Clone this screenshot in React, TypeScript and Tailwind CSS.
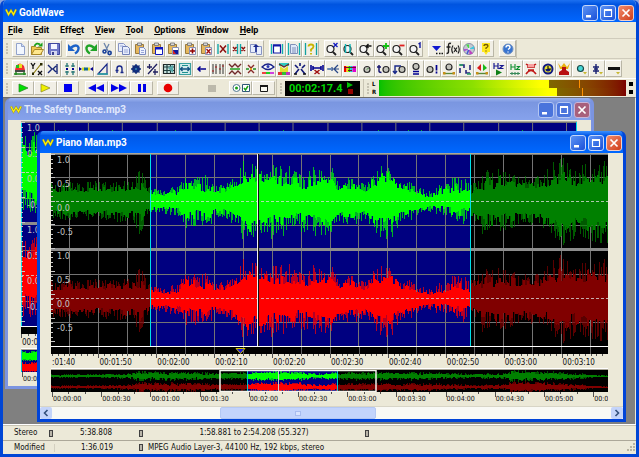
import React from "react";

/* ---------- toolbar icons: each is a list of [path, fill, stroke, strokeWidth] ---------- */
type Stroke = [string, string, string?, number?];
type IconDef = { name: string; art: Stroke[] };

const N = "none";
const NAVY = "#000090";
const PAGE: Stroke = ["M3.5 1.5h5l3 3v8h-8z", "#f2f7ff", "#92a3cc"];
const BOARD: Stroke[] = [
  ["M2.5 2.5h8v9h-8z", "#e5b75c", "#9a7a3c"],
  ["M4.5 1h4v2.500h-4z", "#d8d8d8", "#707070", 0.8],
];
const LENS: Stroke[] = [
  ["M2 7a3.500 3.500 0 1 0 7 0a3.500 3.500 0 1 0-7 0", "#f4f4f4", "#202020", 1.2],
  ["M8 10l3 3", N, "#202020", 1.8],
];
const KNOB: Stroke[] = [
  ["M5 7.500a3 3 0 1 0 6 0a3 3 0 1 0-6 0", "#c4c4bc", "#282828", 1.2],
  ["M8 7.500l1.500-1.500", N, "#208020", 1],
];
const SPECTRUM: Stroke[] = [
  ["M1 4h2.500v6H1z", "#f00000"],
  ["M3.500 4h2v6h-2z", "#f0e000"],
  ["M5.500 4h2v6h-2z", "#00e000"],
  ["M7.500 4h2v6h-2z", "#00d0e0"],
  ["M9.500 4h3.500v6H9.500z", "#e000d0"],
];

const fileIcons: IconDef[] = [
  { name: "New", art: [PAGE, ["M8.500 1.500v3h3", "#cddcf5", "#92a3cc"]] },
  {
    name: "Open",
    art: [
      ["M1.500 12.500v-8h4l1 1h5v7z", "#f0c850", "#a88828"],
      ["M1.500 12.500l3-5h9l-3 5z", "#ffe88c", "#a88828"],
      ["M4.500 4q2-4 5.500-1.500", N, "#18a018", 1.8],
      ["M8 4.500h4.500v-4z", "#18a018"],
    ],
  },
  {
    name: "Save",
    art: [
      ["M1.500 1.500h11v11h-10l-1-1z", "#7078c8", "#4048a0"],
      ["M4 2h6v5H4z", "#f4f6ff"],
      ["M4 9h6v4H4z", "#d4d8f0"],
      ["M5 10h2v3H5z", "#3a4090"],
    ],
  },
];

const editIcons: IconDef[] = [
  { name: "Undo", art: [["M4 5.500q6-4 7.500 0q.5 3.500-3.500 6", N, "#1c62c8", 2.4], ["M1 2v7h7z", "#1c62c8"]] },
  { name: "Redo", art: [["M10 5.500q-6-4-7.500 0q-.5 3.500 3.500 6", N, "#20a428", 2.4], ["M13 2v7H6z", "#20a428"]] },
  {
    name: "Cut",
    art: [
      ["M4 1l4 8M9 2L6 8", N, "#6d85aa", 1.3],
      ["M3 9.500a1.500 1.500 0 1 0 3 0a1.500 1.500 0 1 0-3 0M8 11a1.600 1.600 0 1 0 3.200 0a1.600 1.600 0 1 0-3.200 0", N, "#163f98", 1.6],
    ],
  },
  {
    name: "Copy",
    art: [
      ["M1.500 1.500h5l2 2v6h-7z", "#e8eefc", "#8794c4"],
      ["M5.500 4.500h5l2 2v6h-7z", "#e8eefc", "#7080b8"],
      ["M7 8h4M7 10h4M3 4h3", N, "#9aa8d8"],
    ],
  },
  { name: "Paste", art: [...BOARD, ["M6.500 5.500h4l2 2v5h-6z", "#eef3ff", "#7c8cc0"], ["M8 8.500h3M8 10.500h3", N, "#9aa8d8"]] },
  { name: "Paste new", art: [...BOARD, ["M5.500 5.500h7v7h-7z", "#ffffff", "#1018c0"], ["M5 5h8v2.500H5z", "#1018c0"]] },
  { name: "Paste at", art: [...BOARD, ["M6.500 5.500h6v7h-6z", "#ffffff", "#8890b8"], ["M7 8h5v4H7z", "#1018a0"], ["M7 8l3 4h-3z", "#e02020"]] },
  { name: "Mix", art: [...BOARD, ["M6.500 5.500h6v7h-6z", "#ffffff", "#8890b8"], ["M9.500 6.500v5M7 9h5", N, "#900000", 1.6]] },
  { name: "Replace", art: [...BOARD, ["M6.500 5.500h6v7h-6z", "#ffffff", "#8890b8"], ["M7.500 7l4 4.500M11.500 7l-4 4.500", N, "#a01010", 1.3]] },
  { name: "Delete", art: [["M2 2v10M12 2v10", N, "#10a8a8", 1.4], ["M4 3.500l6 7M10 3.500l-6 7", N, "#8c1010", 1.5]] },
  { name: "Trim", art: [["M5.500 2v10M8.500 2v10", N, "#10a8a8", 1.4], ["M1 5l3.500 4M4.500 5L1 9M9.500 5l3.500 4M13 5L9.500 9", N, "#8c1010", 1.4]] },
  {
    name: "Duplicate",
    art: [
      ["M1.500 2.500h5v8h-5z", "#e8eefc", "#8794c4"],
      ["M7.500 4.500h5v8h-5z", "#e8eefc", "#8794c4"],
      ["M7 10V4", N, "#182890", 1.5],
      ["M4 5L7 2l3 3z", "#182890"],
    ],
  },
];

const selectIcons: IconDef[] = [
  { name: "Select view", art: [["M1.500 2v10M12.500 2v10", N, "#10b0b0", 1.3], ["M3.500 3h7v8h-7z", "#ffffff", "#1018a8", 1.2], ["M3 2.500h8v2H3z", "#1018a8"]] },
  { name: "Select all", art: [["M1.500 1v12M12.500 1v12", N, "#10b0b0", 1.3], ["M3.500 2.500h5l2 2v7h-7z", "#dfe8fa", "#8090b8"], ["M5 6h4M5 8h4M5 10h4", N, "#8090b8"]] },
  { name: "Set selection", art: [["M1.500 1v12M12.500 1v12", N, "#10a0a0", 1.3], ["M4.500 4.500q0-2 2.500-2t2.500 2q0 1.500-2.500 3v2M7 11v1.500", N, "#c8b400", 1.8]] },
];

const zoomIcons: IconDef[] = [
  { name: "Zoom 10%", art: [...LENS, ["M8.500 1l4 4M12.500 1l-4 4", N, "#1018c0", 1.3]] },
  { name: "Zoom selection", art: [...LENS, ["M3.500 2v9M8 2v9", N, "#10b8b8", 1.4]] },
  { name: "Zoom previous", art: [...LENS, ["M8.500 4h5M10.500 2l-2 2l2 2", N, "#101010", 1.3]] },
  { name: "Zoom in", art: [...LENS, ["M11 1v6M8 4h6", N, "#10c010", 1.8]] },
  { name: "Zoom out", art: [...LENS, ["M8.500 3.500h5", N, "#e02020", 1.8]] },
  { name: "Zoom 1:1", art: [...LENS, ["M10.500 2l1.500-1v5", N, "#1018a0", 1.4]] },
];

const toolIcons: IconDef[] = [
  { name: "Drop cue", art: [["M3 4h9L7.500 9z", "#1018d0"], ["M7 11.500h1.500M10 11.500h1.500M12.500 11.500h1.500", N, "#101010", 1.5]] },
  {
    name: "Expression evaluator",
    art: [
      ["M5 1.500q-2.500-1-2.500 2v6q0 2-2 2M.500 5h4", N, "#202020", 1.4],
      ["M7 3.500q-2.500 4 0 8M12 3.500q2.500 4 0 8M8 5.500l3 4.500M11 5.500l-3 4.500", N, "#202020", 1.2],
    ],
  },
  {
    name: "CD reader",
    art: [
      ["M1.500 7a5.500 5.500 0 1 0 11 0a5.500 5.500 0 1 0-11 0", "#c4c8d0", "#8890a8"],
      ["M7 7l-3-4.500h3z", "#48d848"],
      ["M7 7l5-3v3z", "#40c8e0"],
      ["M7 7l4 4.500l-3.500 1z", "#c040c0"],
      ["M7 7L2 9.500V7z", "#b050d0"],
      ["M7 7l-2 5", N, "#4858d0", 1.5],
      ["M6 7a1 1 0 1 0 2 0a1 1 0 1 0-2 0", "#ffffff"],
    ],
  },
  { name: "Context help", art: [["M3 1h8v9H9l-2 3l-2-3H3z", "#ffe820"], ["M5 4q0-1.500 2-1.500t2 1.500q0 1-2 2v1M7 8.500v1", N, "#705800", 1.3]] },
];

const helpIcons: IconDef[] = [
  {
    name: "Help",
    art: [
      ["M2 7a5 5 0 1 0 10 0a5 5 0 1 0-10 0", "#3874d0", "#7090c0"],
      ["M5 5.500q0-2 2-2t2 1.800q0 1-2 2.200M7 9.500v1", N, "#ffffff", 1.4],
    ],
  },
];

const effectIcons: IconDef[] = [
  {
    name: "Censor",
    art: [
      ["M3 4q4-5 8 0l1 4H2z", "#f03030"],
      ["M3 3h3v3H3z", "#20c020"],
      ["M6 2h3v4H6z", "#e8e020"],
      ["M2 9h10", N, "#101010", 1.4],
      ["M1 12h12M3 10v3M11 10v3", N, "#208820", 1.5],
    ],
  },
  { name: "Channel mixer", art: [["M1 1l2 3l2-3M3 4v3M8 9l4 4M12 9l-4 4", N, "#101010", 1.3], ["M11 2L3 12", N, "#887800", 1.1], ["M10 1h2.500v2.500H10zM2 10.500h2V13H2z", "#282800"]] },
  { name: "Compressor", art: [["M2 3l4 4l-4 4M11 2v10M10 4L7 7l3 3", N, "#182878", 1.4]] },
  { name: "Doppler", art: [["M4 1v4M4 9v4M10 1v4M10 9v4M2 4h4M2 10h4M8 4h4M8 10h4", N, "#106868", 1.2], ["M3 6h2v2H3zM9 6h2v2H9z", NAVY]] },
  { name: "Dynamics", art: [["M0 5l3 2l-3 2zM14 5l-3 2l3 2z", NAVY], ["M3 5.500h3v3H3z", "#d8e020"], ["M5 5.500h4v3H5z", "#106890"], ["M9 5.500h2v3H9z", "#e8e020"]] },
  { name: "Echo", art: [["M2 12L11 2v10z", N, "#182888", 1.2], ["M2 12h10", N, "#20a0a0", 1.3]] },
  { name: "Filter", art: [["M5 11V6.500q0-2.500 2.500-2.500t2.500 2.500V10M3.500 8.500h3M8.500 10.500h3", N, "#182888", 1.4]] },
  {
    name: "Flanger",
    art: [
      ["M3.500 7a3.500 3.500 0 1 0 7 0a3.500 3.500 0 1 0-7 0", "#183888", "#081858", 1],
      ["M7 2v10M2 7h10M3.500 3.500l7 7M10.500 3.500l-7 7", N, "#103080", 1.3],
      ["M6 7a1 1 0 1 0 2 0a1 1 0 1 0-2 0", "#3888b0"],
    ],
  },
  { name: "Interpolate", art: [["M2 5h5M4.500 2v5M8 10h5M10 7v6M12 2L3 12", N, "#202060", 1.3]] },
  {
    name: "Invert",
    art: [
      ["M1.500 2.500h11v9h-11z", "#c8e4e0", "#202828", 1.2],
      ["M2 5h10M2 8.500h10M5 2v9M8.500 2v9", N, "#204040", 1.2],
      ["M6 6l5-3v8z", "#58a8a8"],
    ],
  },
  { name: "Maximize", art: [["M1.500 1.500h11v11h-11z", "#d4ecec", "#38a0a0", 1.2], ["M2 7h10M4.500 5L2.500 7l2 2M9.500 5l2 2l-2 2", N, "#105080", 1.3], ["M4 3.500h6M4 10.500h6", N, "#209090"]] },
  { name: "Offset", art: [["M3 7h8M5.500 4.500L3 7l2.500 2.500", N, NAVY, 1.5]] },
  { name: "Match volume", art: [["M2 2v10M5 2v10M9 2v10M12 2v10", N, "#303030", 1], ["M1 9h2M4 5h2M8 7h2M11 4h2", N, "#a04040", 1.5]] },
  { name: "Pan", art: [["M1 2l3 3l3-3l3 3l3-3M1 12l3-3l3 3l3-3l3 3", N, "#702828", 1.4], ["M2 7h10", N, "#20a020", 1.5]] },
  { name: "Pitch", art: [["M4 3l3 3l3-3M4 11l3-3l3 3", N, "#882828", 1.4], ["M2 7h3M9 7h3", N, "#209020", 1.6], ["M6 6h2v2H6z", "#e0a020"]] },
  {
    name: "Noise reduction",
    art: [
      ["M1 5q6-6 12 0q-6 5-12 0z", "#ffffff", "#182088", 1.3],
      ["M5.500 4.500a1.500 1.500 0 1 0 3 0a1.500 1.500 0 1 0-3 0", "#2838b0"],
      ["M1 10h4v2H1z", "#f04040"],
      ["M5 10h4v2H5z", "#20d020"],
      ["M9 10h4v2H9z", "#d040e0"],
    ],
  },
  {
    name: "Parametric EQ",
    art: [
      ["M2 1h10v3H2z", "#30c8c0"],
      ["M3 4l4 3l4-3v6H3z", "#e0e030"],
      ["M1 10h4v3H1z", "#e03030"],
      ["M5 10h4v3H5z", "#30c030"],
      ["M9 10h4v3H9z", "#c030c0"],
      ["M2 2l5 3l5-3", N, "#702020", 1.2],
    ],
  },
  { name: "Pop and click", art: [["M2 12l4-5M12 12L8 7M7 1v3M2 3l3 3M12 3L9 6", N, "#101878", 1.6], ["M1 12h3M10 12h3", N, "#101010", 1.4]] },
  { name: "Silence reduction", art: [["M1 3v6M3 4v4M13 3v6M11 4v4M3 6h8", N, NAVY, 1.6], ["M4.500 8l5 4M9.500 8l-5 4", N, "#a01010", 1.5]] },
  { name: "Smoother", art: [["M1 7h12M8 7l4-4M8 7l4 4M6 5v4", N, "#284888", 1.2], ["M2 6h4v2H2z", "#6888b8"]] },
  { name: "Spectrum filter", art: [...SPECTRUM, ["M1 5.500h12M5 8.500h4", N, "#701030", 1]] },
  { name: "Resample", art: [...KNOB] },
  { name: "Reverb", art: [["M7 7.500a3 3 0 1 0 6 0a3 3 0 1 0-6 0", "#c4c4bc", "#282828", 1.2], ["M3 3v6q0 1.500 2.500 1.500M1 5h4", N, "#181870", 1.5]] },
  { name: "Reverse", art: [["M7 7.500a3 3 0 1 0 6 0a3 3 0 1 0-6 0", "#c4c4bc", "#282828", 1.2], ["M3 11V4h6M1 9l2 2.500l2-2.500", N, "#182888", 1.4]] },
  { name: "Time warp", art: [["M4 4.500a3 3 0 1 0 6 0a3 3 0 1 0-6 0", "#c4c4bc", "#282828", 1.2], ["M4 9.500h6M4 12h6", N, NAVY, 1.3]] },
  { name: "Change volume", art: [["M2 7.500a3 3 0 1 0 6 0a3 3 0 1 0-6 0", "#c4c4bc", "#282828", 1.2], ["M11.500 3v5.500M11.500 9.500v2", N, NAVY, 1.7]] },
  { name: "Fade in", art: [["M4 5a3 3 0 1 0 6 0a3 3 0 1 0-6 0", "#c4c4bc", "#282828", 1.2], ["M2 11.500h10", N, "#588838", 1.3], ["M1 10h2.500v2.500H1zM10.500 10H13v2.500h-2.500z", "#c89018"]] },
  { name: "Fade out", art: [["M2 3h4v3M12 11H8V8M12 3v5M2 6v5", N, "#282880", 1.6], ["M1 3h4M9 12h4", N, "#20a060", 1.3]] },
  { name: "Shape volume", art: [["M6 2L2 6l4 3z", "#d81818"], ["M8 2l4 4l-4 3z", "#18b818"], ["M2 11.500h10", N, "#588838", 1.4], ["M1 10h2.500v2.500H1zM10.500 10H13v2.500h-2.500z", "#c89018"]] },
  { name: "Playback rate", art: [["M3 1v6M7 1v6M3 4h4M8.500 3.500h3.500l-3.500 3h4", N, "#181890", 1.2], ["M5 7.500l6 3l-6 3z", "#108018"]] },
  { name: "Sample rate", art: [["M3 2v6M7 2v6M3 5h4M8.500 4.500h3l-3 3h3.500", N, "#109030", 1.1], ["M2 11.500h10M4 10v3M7 10v3M10 10v3", N, "#388858", 1.1]] },
  { name: "Mechanize", art: [["M2 2q5 4 10 0M2 12q5-7 10 0M3 5h8M4 8h6", N, "#c01818", 1.6], ["M4 2h6v3H4z", "#f8a0a0"]] },
  { name: "Timer", art: [["M2.500 7a4.500 4.500 0 1 0 9 0a4.500 4.500 0 1 0-9 0", "#e8e030", "#101880", 2], ["M7 7m-2.500 0a2.500 2.500 0 1 0 5 0z", "#101880"], ["M7 4v3h3", N, "#101010", 1.2]] },
  { name: "Voice over", art: [["M1 1l3 4l3-4l3 4l3-4l-2 6H3z", "#e8b010"], ["M5 5h4v3l3 2v3H2v-3l3-2z", "#b81010"]] },
  { name: "Plug-in", art: [["M3.500 6.500a3 3 0 1 0 6 0a3 3 0 1 0-6 0", "#48d8d8", "#184848", 1.2], ["M9 10h4l-2 2.500z", "#c8b830"]] },
  { name: "Automate", art: [["M6 2v10M3 5h6M3 9h6M4 7h4", N, "#182070", 1.4], ["M9 10h4l-2 2.500z", "#c8b830"]] },
  { name: "Presets", art: [["M1 5h12v3H1z", "#101010"], ["M9 10h4l-2 2.500z", "#c8b830"]] },
];

function Glyph({ art }: { art: Stroke[] }) {
  return (
    <svg viewBox="0 0 14 14" className="h-[14px] w-[14px] shrink-0" aria-hidden="true">
      {art.map(([d, fill, stroke, width], i) => (
        <path key={i} d={d} fill={fill} stroke={stroke ?? "none"} strokeWidth={width ?? 1} />
      ))}
    </svg>
  );
}

const raised =
  "border border-t-white border-l-white border-r-[#b9b6a6] border-b-[#b9b6a6] bg-[#f1efe6]";

function IconGroup({ icons, width }: { icons: IconDef[]; width: string }) {
  return (
    <div className={`flex h-[17px] shrink-0 ${width}`}>
      {icons.map((icon) => (
        <button
          key={icon.name}
          type="button"
          aria-label={icon.name}
          className={`flex min-w-0 flex-1 items-center justify-center ${raised}`}
        >
          <Glyph art={icon.art} />
        </button>
      ))}
    </div>
  );
}

function Grip() {
  return (
    <div className="flex shrink-0 flex-col gap-px px-[3px]">
      {[0, 1, 2, 3].map((i) => (
        <span key={i} className="h-[2px] w-[2px] bg-[#c6c2b2]" />
      ))}
    </div>
  );
}

/* ---------- transport ---------- */
function TransportButton({ label, children }: { label: string; children: React.ReactNode }) {
  return (
    <button type="button" aria-label={label} className={`flex flex-1 items-center justify-center ${raised}`}>
      <svg viewBox="0 0 18 10" className="h-[10px] w-[18px]" aria-hidden="true">
        {children}
      </svg>
    </button>
  );
}

function TransportBar() {
  return (
    <div className="flex h-[19px] shrink-0 items-center border-t border-white">
      <div className="w-[9px] shrink-0">
        <Grip />
      </div>
      <div className="flex h-[14px] w-[67px] shrink-0">
        <TransportButton label="Play"><path d="M5 1l9 4l-9 4z" fill="#00e000" stroke="#208020" strokeWidth=".7" /></TransportButton>
        <TransportButton label="Play selection"><path d="M5 1l9 4l-9 4z" fill="#f0f000" stroke="#888820" strokeWidth=".7" /></TransportButton>
        <TransportButton label="Stop"><path d="M5 1h8v8H5z" fill="#0000f0" /></TransportButton>
      </div>
      <div className="ml-[6px] flex h-[14px] w-[68px] shrink-0">
        <TransportButton label="Rewind"><path d="M9 1v8L1 5zM17 1v8L9 5z" fill="#0000e8" /></TransportButton>
        <TransportButton label="Fast forward"><path d="M1 1v8l8-4zM9 1v8l8-4z" fill="#0000e8" /></TransportButton>
        <TransportButton label="Pause"><path d="M5 1h3v8H5zM10 1h3v8h-3z" fill="#0000e8" /></TransportButton>
      </div>
      <div className="ml-[4px] flex h-[14px] w-[22px] shrink-0">
        <TransportButton label="Record"><circle cx="9" cy="5" r="4.300" fill="#e80000" /></TransportButton>
      </div>
      <div className="ml-[29px] h-[7px] w-[8px] shrink-0 bg-[#bcb9ab]" />
      <div className="ml-[13px] flex h-[14px] w-[46px] shrink-0">
        <TransportButton label="Options">
          <circle cx="4.500" cy="5" r="3.500" fill="#fff" stroke="#507890" />
          <circle cx="4.500" cy="5" r="1.500" fill="#18a018" />
          <path d="M10.500 1.500h7v7h-7z" fill="#fff" stroke="#305878" />
          <path d="M12 5l1.500 2L16 3" fill="none" stroke="#18a018" strokeWidth="1.500" />
        </TransportButton>
        <TransportButton label="Control window">
          <path d="M5.500 2.500h7v6h-7z" fill="#f8f8f0" stroke="#181818" />
          <path d="M5 2h8v2H5z" fill="#181818" />
        </TransportButton>
      </div>
      <div className="ml-px flex h-[18px] items-center border-l border-[#c9c5b4]">
        <Grip />
      </div>
      <div className="flex h-[15px] w-[75px] shrink-0 items-center justify-between bg-black pl-[4px] pr-[6px] font-['Roboto',sans-serif] text-[11px] font-bold leading-none text-[#00d800]">
        <output>00:02:17.4</output>
        <svg viewBox="0 0 7 12" className="h-[12px] w-[7px]" aria-hidden="true">
          <path d="M0 0l6 3l-6 3z" fill="#00c000" />
          <path d="M1 7h5v5H1z" fill="#900000" />
        </svg>
      </div>
      <div className="ml-[3px] flex h-[18px] items-center border-l border-[#c9c5b4]">
        <Grip />
      </div>
      <div className="flex h-[16px] w-[7px] shrink-0 flex-col text-[6px] font-bold leading-[8px] text-black">
        <span>L</span>
        <span>R</span>
      </div>
      <LevelMeter />
      <div className="flex h-[15px] w-[10px] shrink-0 flex-col items-center justify-around">
        <span className="h-[4px] w-[4px] bg-black" />
        <span className="h-[4px] w-[4px] bg-black" />
      </div>
    </div>
  );
}

function LevelMeter() {
  const channels = [
    { level: 69, peak: 81 },
    { level: 72, peak: 82 },
  ];
  return (
    <div className="flex h-[16px] min-w-0 flex-1 flex-col" role="img" aria-label="Level meter">
      {channels.map((c, i) => (
        <div key={i} className="relative flex flex-1">
          <span
            className="bg-linear-to-r from-[#00c000] via-[#8ce000] via-55% to-[#ffff00] to-95%"
            style={{ width: `${c.level}%` }}
          />
          <span className="flex-1 bg-linear-to-r from-[#7e6600] via-[#864400] to-[#7c0000]" />
          <span className="absolute inset-y-0 w-px bg-[#ff9000]" style={{ left: `${c.peak}%` }} />
        </div>
      ))}
    </div>
  );
}

/* ---------- window chrome ---------- */
function Logo() {
  return (
    <svg viewBox="0 0 12 9" className="h-[9px] w-[12px] shrink-0" aria-hidden="true">
      <path d="M1 1.500l2.500 5L6 2.500l2.500 4L11 1.500" fill="none" stroke="#8c8a20" strokeWidth="2.200" />
      <path d="M1 1.500l2.500 5L6 2.500l2.500 4L11 1.500" fill="none" stroke="#f8ec10" strokeWidth="1.400" />
    </svg>
  );
}

function CaptionButtons({ faded = false }: { faded?: boolean }) {
  const base = "flex h-[16px] w-[16px] items-center justify-center rounded-[3px] border";
  const blue = faded ? "border-[#b4c6f2] bg-[#4a74dc]" : "border-[#c5d7fa] bg-linear-to-br from-[#5c92f4] to-[#1c4fd8]";
  const red = faded ? "border-[#c8b4d8] bg-[#a8607c]" : "border-[#f4d0c8] bg-linear-to-br from-[#f08868] to-[#d03c14]";
  return (
    <div className="flex gap-[2px]">
      <button type="button" aria-label="Minimize" className={`${base} ${blue}`}>
        <svg viewBox="0 0 12 12" className="h-[12px] w-[12px]"><path d="M2 8h5v2.500H2z" fill="#fff" /></svg>
      </button>
      <button type="button" aria-label="Maximize" className={`${base} ${blue}`}>
        <svg viewBox="0 0 12 12" className="h-[12px] w-[12px]"><path d="M2 2.500h8M2.500 3v6.500h7V3M2 3.500h8" fill="none" stroke="#fff" strokeWidth="1.200" /></svg>
      </button>
      <button type="button" aria-label="Close" className={`${base} ${red}`}>
        <svg viewBox="0 0 12 12" className="h-[12px] w-[12px]"><path d="M2.500 2.500l7 7M9.500 2.500l-7 7" stroke="#fff" strokeWidth="1.700" /></svg>
      </button>
    </div>
  );
}

/* ---------- waveform data ---------- */
type Env = [number, number, number][]; // x, body height, spike height

const pianoEnv: Env = [
  [0, 9, 17], [49, 10, 18], [80, 10, 20], [88, 12, 30], [99, 7, 13], [112, 5, 11], [125, 7, 15],
  [134, 9, 24], [150, 10, 26], [164, 9, 18], [174, 8, 16], [184, 14, 25], [194, 20, 40],
  [207, 18, 36], [229, 14, 34], [249, 12, 28], [269, 15, 32], [281, 17, 35], [286, 11, 20],
  [299, 11, 22], [314, 10, 18], [324, 14, 29], [338, 16, 38], [349, 11, 22], [364, 7, 15],
  [377, 4, 9], [389, 5, 15], [404, 7, 22], [419, 7, 20], [424, 10, 24], [430, 12, 30],
  [449, 13, 32], [469, 12, 23], [489, 12, 26], [504, 17, 36], [511, 19, 46], [524, 15, 32],
  [539, 17, 38], [557, 18, 38],
];
const danceEnv: Env = [[0, 18, 38], [557, 18, 38]];
const overviewEnv: Env = [
  [0, 0.5, 1.5], [75, 0.7, 2.5], [84, 1.5, 4.5], [140, 1.6, 4.5], [176, 1.2, 3.5], [214, 2.5, 5],
  [250, 2, 4.5], [264, 0.8, 2.5], [280, 1.5, 4], [371, 1.5, 4], [418, 0.8, 2.5], [455, 1, 3],
  [460, 2.5, 6], [500, 1.6, 4.5], [530, 1, 3], [545, 0.5, 1], [557, 0.5, 0.5],
];
const danceOverviewEnv: Env = [[0, 3.5, 5], [557, 3.5, 5]];

function noise(i: number, seed: number) {
  const v = Math.sin(i * 12.9898 + seed * 78.233) * 43758.5453;
  return v - Math.floor(v);
}

function sample(env: Env, x: number): [number, number] {
  for (let i = 1; i < env.length; i++) {
    if (x <= env[i][0]) {
      const [x0, a0, b0] = env[i - 1];
      const [x1, a1, b1] = env[i];
      const t = (x - x0) / (x1 - x0);
      return [a0 + (a1 - a0) * t, b0 + (b1 - b0) * t];
    }
  }
  const last = env[env.length - 1];
  return [last[1], last[2]];
}

function wavePaths(env: Env, mid: number, from: number, to: number, seed: number) {
  let body = "";
  let spikes = "";
  for (let x = from; x < to; x++) {
    const [a, b] = sample(env, x);
    const edge = (salt: number) => {
      const slow = noise(Math.floor(x / 5), salt + 11);
      const quick = noise(x >> 1, seed + salt);
      const solid = a * 0.9 + (b - a) * (0.25 * slow + 0.6 * quick * quick);
      const n = noise(x, salt + 5);
      const tall = solid + (b * 1.12 - solid) * n * n;
      return [solid, n > 0.5 ? Math.max(tall, solid) : solid];
    };
    const [up, upTall] = edge(1);
    const [down, downTall] = edge(2);
    body += `M${x} ${(mid - up).toFixed(1)}h1V${(mid + down).toFixed(1)}h-1z`;
    spikes += `M${x} ${(mid - upTall).toFixed(1)}h1V${(mid + downTall).toFixed(1)}h-1z`;
  }
  return { body, spikes };
}

function Channel({ env, mid, select, seed, dim, bright }: {
  env: Env; mid: number; select: [number, number]; seed: number; dim: string; bright: string;
}) {
  const parts: [number, number, string][] = [
    [0, select[0], dim],
    [select[0], select[1], bright],
    [select[1], 557, dim],
  ];
  return (
    <g shapeRendering="crispEdges">
      {parts.map(([from, to, color], i) => {
        const { body, spikes } = wavePaths(env, mid, from, to, seed);
        return (
          <g key={i} fill={color}>
            <path d={spikes} opacity="0.7" />
            <path d={body} />
          </g>
        );
      })}
    </g>
  );
}

type RulerLabel = [number, string]; // step index, text

type Track = {
  title: string;
  env: Env;
  overview: Env;
  height: number;
  gridStart: number;
  gridStep: number;
  select: [number, number];
  cursor?: number;
  rulerStart: number;
  rulerLabels: RulerLabel[];
  overviewLabels: RulerLabel[];
  overviewSelect: [number, number];
  view?: [number, number];
  overviewCursor?: number;
};

function Plot({ track }: { track: Track }) {
  const h = track.height;
  const half = h / 2;
  const mids = [half / 2 - 1, half + half / 2];
  const lines: number[] = [];
  for (let x = track.gridStart; x < 557; x += track.gridStep) lines.push(x);
  const [s0, s1] = track.select;
  return (
    <div className="relative border-t border-[#aca899]">
      <svg
        viewBox={`0 0 557 ${h}`}
        preserveAspectRatio="none"
        className="block w-full bg-black"
        style={{ height: h }}
        role="img"
        aria-label={`${track.title} waveform`}
      >
        <rect x={s0} width={s1 - s0} height={h} fill="#000080" />
        <g fill="#747474">
          <rect width="557" height="1" />
          {lines.map((x) => <rect key={x} x={Math.round(x)} width="1" height={h} />)}
          {mids.map((m) => (
            <g key={m}>
              <rect y={Math.round(m - half / 4)} width="557" height="1" />
              <rect y={Math.round(m + half / 4)} width="557" height="1" />
            </g>
          ))}
        </g>
        <Channel env={track.env} mid={mids[0]} select={track.select} seed={3} dim="#008000" bright="#00ff00" />
        <Channel env={track.env} mid={mids[1] + 1} select={track.select} seed={4} dim="#800000" bright="#ff0000" />
        <rect y={half - 2} width="557" height="3" fill="#8c8c8c" />
        <g stroke="#d8d8d8" strokeDasharray="3 2">
          <path d={`M0 ${mids[0] + 0.5}H557M0 ${mids[1] + 0.5}H557`} opacity="0.8" />
        </g>
        <rect x={s0} width="1" height={h} fill="#00e0e8" />
        <rect x={s1 - 1} width="1" height={h} fill="#00e0e8" />
        {track.cursor !== undefined && (
          <g>
            <rect x={track.cursor} width="1" height={h} fill="#f0f0f0" />
            <rect x={track.cursor + 1} width="1" height={h} fill="#101010" />
          </g>
        )}
        <g stroke="#c8c8c8">
          {Array.from({ length: 41 }, (_, i) => (
            <path key={i} d={`M0 ${Math.round((i * h) / 41) + 0.5}h${i % 5 === 0 ? 4 : 2}`} />
          ))}
        </g>
      </svg>
      <div className="absolute inset-y-0 left-[6px] grid auto-rows-fr text-[9px] leading-[12px] text-[#c4c4c4]">
        {["1.0", "0.5", "0.0", "-0.5", "1.0", "0.5", "0.0", "-0.5"].map((v, i) => (
          <span key={i}>{v}</span>
        ))}
      </div>
    </div>
  );
}

function Ruler({ start, step, minor, labels, compact }: {
  start: number; step: number; minor: number; labels: RulerLabel[]; compact?: boolean;
}) {
  const ticks: number[] = [];
  for (let x = start; x < 557; x += step / minor) if (x >= 0) ticks.push(x);
  return (
    <div className={`relative overflow-hidden ${compact ? "h-[13px] text-[7px] leading-[15px]" : "h-[14px] text-[8px] leading-[17px]"}`}>
      <svg viewBox="0 0 557 6" preserveAspectRatio="none" className="absolute inset-x-0 top-0 h-[6px] w-full" aria-hidden="true">
        {ticks.map((x) => {
          const major = Math.abs((x - start) / step - Math.round((x - start) / step)) < 0.01;
          return <rect key={x} x={Math.round(x)} width="1" height={major ? (compact ? 5 : 4) : 2} fill="#505050" />;
        })}
      </svg>
      {labels.map(([i, t]) => (
        <span
          key={i}
          className="absolute top-0 pl-px whitespace-nowrap text-[#101010]"
          style={{ left: `${(Math.max(0, start + i * step) / 557) * 100}%` }}
        >
          {t}
        </span>
      ))}
    </div>
  );
}

function Overview({ track }: { track: Track }) {
  const [s0, s1] = track.overviewSelect;
  return (
    <svg viewBox="0 0 557 22" preserveAspectRatio="none" className="block h-[22px] w-full bg-black" role="img" aria-label={`${track.title} overview`}>
      <rect x={s0} width={s1 - s0} height="22" fill="#000080" />
      <Channel env={track.overview} mid={6} select={track.overviewSelect} seed={7} dim="#008000" bright="#00ff00" />
      <Channel env={track.overview} mid={17} select={track.overviewSelect} seed={8} dim="#800000" bright="#ff0000" />
      <rect x={s0} width="1" height="22" fill="#00c8d0" />
      <rect x={s1 - 1} width="1" height="22" fill="#00c8d0" />
      {track.overviewCursor !== undefined && <rect x={track.overviewCursor} width="1" height="22" fill="#c8c8c8" />}
      {track.view && (
        <rect x={track.view[0]} y="0.500" width={track.view[1] - track.view[0]} height="21" fill="none" stroke="#f4f4ec" strokeWidth="1.500" />
      )}
    </svg>
  );
}

function WaveWindow({ track, active, place, inset }: { track: Track; active: boolean; place: string; inset: string }) {
  const frame = active
    ? "border-[#0044d8] bg-[#0044d8]"
    : "border-[#7b94e0] bg-[#7b94e0]";
  const title = active
    ? "bg-linear-to-b from-[#3a90ff] via-[#0058e8] via-20% to-[#0068ff] text-white"
    : "bg-linear-to-b from-[#9db4f0] via-[#7a96e0] via-20% to-[#86a2ec] text-[#e0e8fc]";
  return (
    <section className={`absolute flex w-[589px] flex-col overflow-hidden rounded-t-[6px] border-x-[3px] border-b-[3px] ${frame} ${place}`}>
      <header className={`flex h-[22px] shrink-0 items-center pt-px pr-px pl-[2px] ${title}`}>
        <Logo />
        <h2 className="ml-[2px] flex-1 font-['Roboto',sans-serif] text-[10px] font-bold leading-none">{track.title}</h2>
        <CaptionButtons faded={!active} />
      </header>
      <div className="flex flex-1 flex-col bg-[#ece9d8]">
        <div className={inset}>
          <Plot track={track} />
          <div className="relative h-[8px] border-t border-white bg-black">
            <svg viewBox="0 0 557 7" preserveAspectRatio="none" className="block h-[7px] w-full" aria-hidden="true">
              {Array.from({ length: 19 }, (_, i) => (
                <rect key={i} x={Math.round(track.gridStart + i * track.gridStep)} width="1" height="7" fill="#606060" />
              ))}
              {active && <path d="M185 1.500h9l-4.500 5z" fill="#1818e0" stroke="#d0c000" />}
            </svg>
          </div>
          <Ruler start={track.rulerStart} step={track.gridStep * 2} minor={10} labels={track.rulerLabels} />
          <div className="h-[2px] border-t border-white bg-[#aca899]" />
          <Overview track={track} />
          <Ruler start={1} step={49.2} minor={3} labels={track.overviewLabels} compact />
        </div>
        {active && (
          <div className="mt-px flex h-[13px] items-stretch border-t border-[#d8d5c6] bg-[#f9f9f5]">
            <button type="button" aria-label="Scroll left" className="flex w-[12px] items-center justify-center rounded-[2px] bg-[#c4d4fa]">
              <svg viewBox="0 0 6 8" className="h-[8px] w-[6px]"><path d="M4.500 1L1.500 4l3 3" fill="none" stroke="#34507c" strokeWidth="1.600" /></svg>
            </button>
            <div className="flex flex-1">
              <div className="w-[30%]" />
              <div className="flex w-[28%] items-center justify-center rounded-[2px] border border-[#b4c8f4] bg-[#c3d4fc]">
                <span className="h-[5px] w-[6px] border border-[#a8bcf0] bg-[#d8e4ff]" />
              </div>
            </div>
            <button type="button" aria-label="Scroll right" className="flex w-[12px] items-center justify-center rounded-[2px] bg-[#c4d4fa]">
              <svg viewBox="0 0 6 8" className="h-[8px] w-[6px]"><path d="M1.500 1l3 3l-3 3" fill="none" stroke="#34507c" strokeWidth="1.600" /></svg>
            </button>
          </div>
        )}
      </div>
    </section>
  );
}

const piano: Track = {
  title: "Piano Man.mp3",
  env: pianoEnv,
  overview: overviewEnv,
  height: 192,
  gridStart: 18,
  gridStep: 28.95,
  select: [99, 420],
  cursor: 206,
  rulerStart: -10.5,
  rulerLabels: [
    [0, ":01:40"], [1, "00:01:50"], [2, "00:02:00"], [3, "00:02:10"], [4, "00:02:20"],
    [5, "00:02:30"], [6, "00:02:40"], [7, "00:02:50"], [8, "00:03:00"], [9, "00:03:10"],
  ],
  overviewLabels: [
    [0, "00:00:00"], [1, "00:00:30"], [2, "00:01:00"], [3, "00:01:30"], [4, "00:02:00"], [5, "00:02:30"],
    [6, "00:03:00"], [7, "00:03:30"], [8, "00:04:00"], [9, "00:04:30"], [10, "00:05:00"], [11, "00:0"],
  ],
  overviewSelect: [196, 287],
  view: [169, 325],
  overviewCursor: 227,
};

const dance: Track = {
  title: "The Safety Dance.mp3",
  env: danceEnv,
  overview: danceOverviewEnv,
  height: 204,
  gridStart: 33,
  gridStep: 34.2,
  select: [0, 557],
  rulerStart: 0,
  rulerLabels: [[0, "00:00:00"]],
  overviewLabels: [[0, "00:00:00"]],
  overviewSelect: [0, 557],
};

/* ---------- status bar ---------- */
function Marker() {
  return <span className="h-[7px] w-[4px] shrink-0 border border-[#404040] bg-[#b8b4a8]" />;
}

function StatusBar() {
  return (
    <footer className="flex shrink-0 flex-col border-t border-white bg-[#ece9d8] text-[8px] leading-none text-[#101010]">
      <div className="flex h-[15px] items-center border-t border-[#c6c2b2] pl-[11px]">
        <span className="w-[35px]">Stereo</span>
        <Marker />
        <span className="w-[86px] text-center">5:38.808</span>
        <Marker />
        <span className="w-[222px] text-center">1:58.881 to 2:54.208 (55.327)</span>
        <Marker />
      </div>
      <div className="flex h-[14px] items-center border-t border-[#aca899] pl-[11px]">
        <span className="w-[41px] border-r border-[#d4d0c0]">Modified</span>
        <span className="w-[84px] text-center">1:36.019</span>
        <Marker />
        <span className="ml-[5px] flex-1">MPEG Audio Layer-3, 44100 Hz, 192 kbps, stereo</span>
        <svg viewBox="0 0 9 9" className="h-[9px] w-[9px]" aria-hidden="true">
          <path d="M6 0h2v2H6zM3 3h2v2H3zM6 3h2v2H6zM0 6h2v2H0zM3 6h2v2H3zM6 6h2v2H6z" fill="#b8b4a2" />
        </svg>
      </div>
    </footer>
  );
}

const menus: [string, string, string][] = [
  ["", "F", "ile"], ["", "E", "dit"], ["Effe", "c", "t"], ["", "V", "iew"],
  ["", "T", "ool"], ["", "O", "ptions"], ["", "W", "indow"], ["", "H", "elp"],
];

export default function App() {
  return (
    <div className="h-screen bg-[#8ca6e0] font-['DejaVu_Sans_Condensed','DejaVu_Sans',sans-serif]">
      <main className="flex h-full flex-col overflow-hidden rounded-t-[6px] border-x-[3px] border-b-[3px] border-[#0046d5] bg-[#ece9d8]">
        <header className="flex h-[22px] shrink-0 items-center bg-linear-to-b from-[#1c70f0] via-[#0054e0] via-20% to-[#0066ff] pt-[3px] pr-[2px] pl-[2px] text-white">
          <Logo />
          <h1 className="ml-[2px] flex-1 font-['Roboto',sans-serif] text-[10px] font-bold leading-none">GoldWave</h1>
          <CaptionButtons />
        </header>
        <nav className="flex h-[16px] shrink-0 items-center gap-[11px] pl-[5px] font-['Roboto',sans-serif] text-[9px] font-bold leading-none text-black">
          {menus.map(([a, key, b]) => (
            <button key={a + key + b} type="button">
              {a}<span className="underline">{key}</span>{b}
            </button>
          ))}
        </nav>
        <div className="flex h-[20px] shrink-0 items-center border-t border-[#d0ccbc]">
          <div className="w-[9px] shrink-0"><Grip /></div>
          <IconGroup icons={fileIcons} width="w-[50px]" />
          <div className="w-[4px]" />
          <IconGroup icons={editIcons} width="w-[198px]" />
          <div className="w-[5px]" />
          <IconGroup icons={selectIcons} width="w-[50px]" />
          <div className="w-[5px]" />
          <IconGroup icons={zoomIcons} width="w-[99px]" />
          <div className="w-[5px]" />
          <IconGroup icons={toolIcons} width="w-[66px]" />
          <div className="w-[5px]" />
          <IconGroup icons={helpIcons} width="w-[17px]" />
          <div className="h-[18px] border-r border-[#c9c5b4]" />
        </div>
        <div className="flex h-[20px] shrink-0 items-center border-t border-[#d0ccbc]">
          <div className="w-[9px] shrink-0"><Grip /></div>
          <IconGroup icons={effectIcons} width="w-[610px]" />
        </div>
        <TransportBar />
        <div className="relative min-h-0 flex-1 overflow-hidden border-t border-r border-t-[#6c6c6c] border-r-[#ece9d8] bg-[#808080]">
          <WaveWindow track={dance} active={false} place="top-0 left-[2px] h-[291px]" inset="mr-[14px] ml-[13px] pt-px" />
          <WaveWindow track={piano} active place="top-[33px] left-[34px]" inset="mr-[15px] ml-[11px]" />
        </div>
        <StatusBar />
      </main>
    </div>
  );
}
